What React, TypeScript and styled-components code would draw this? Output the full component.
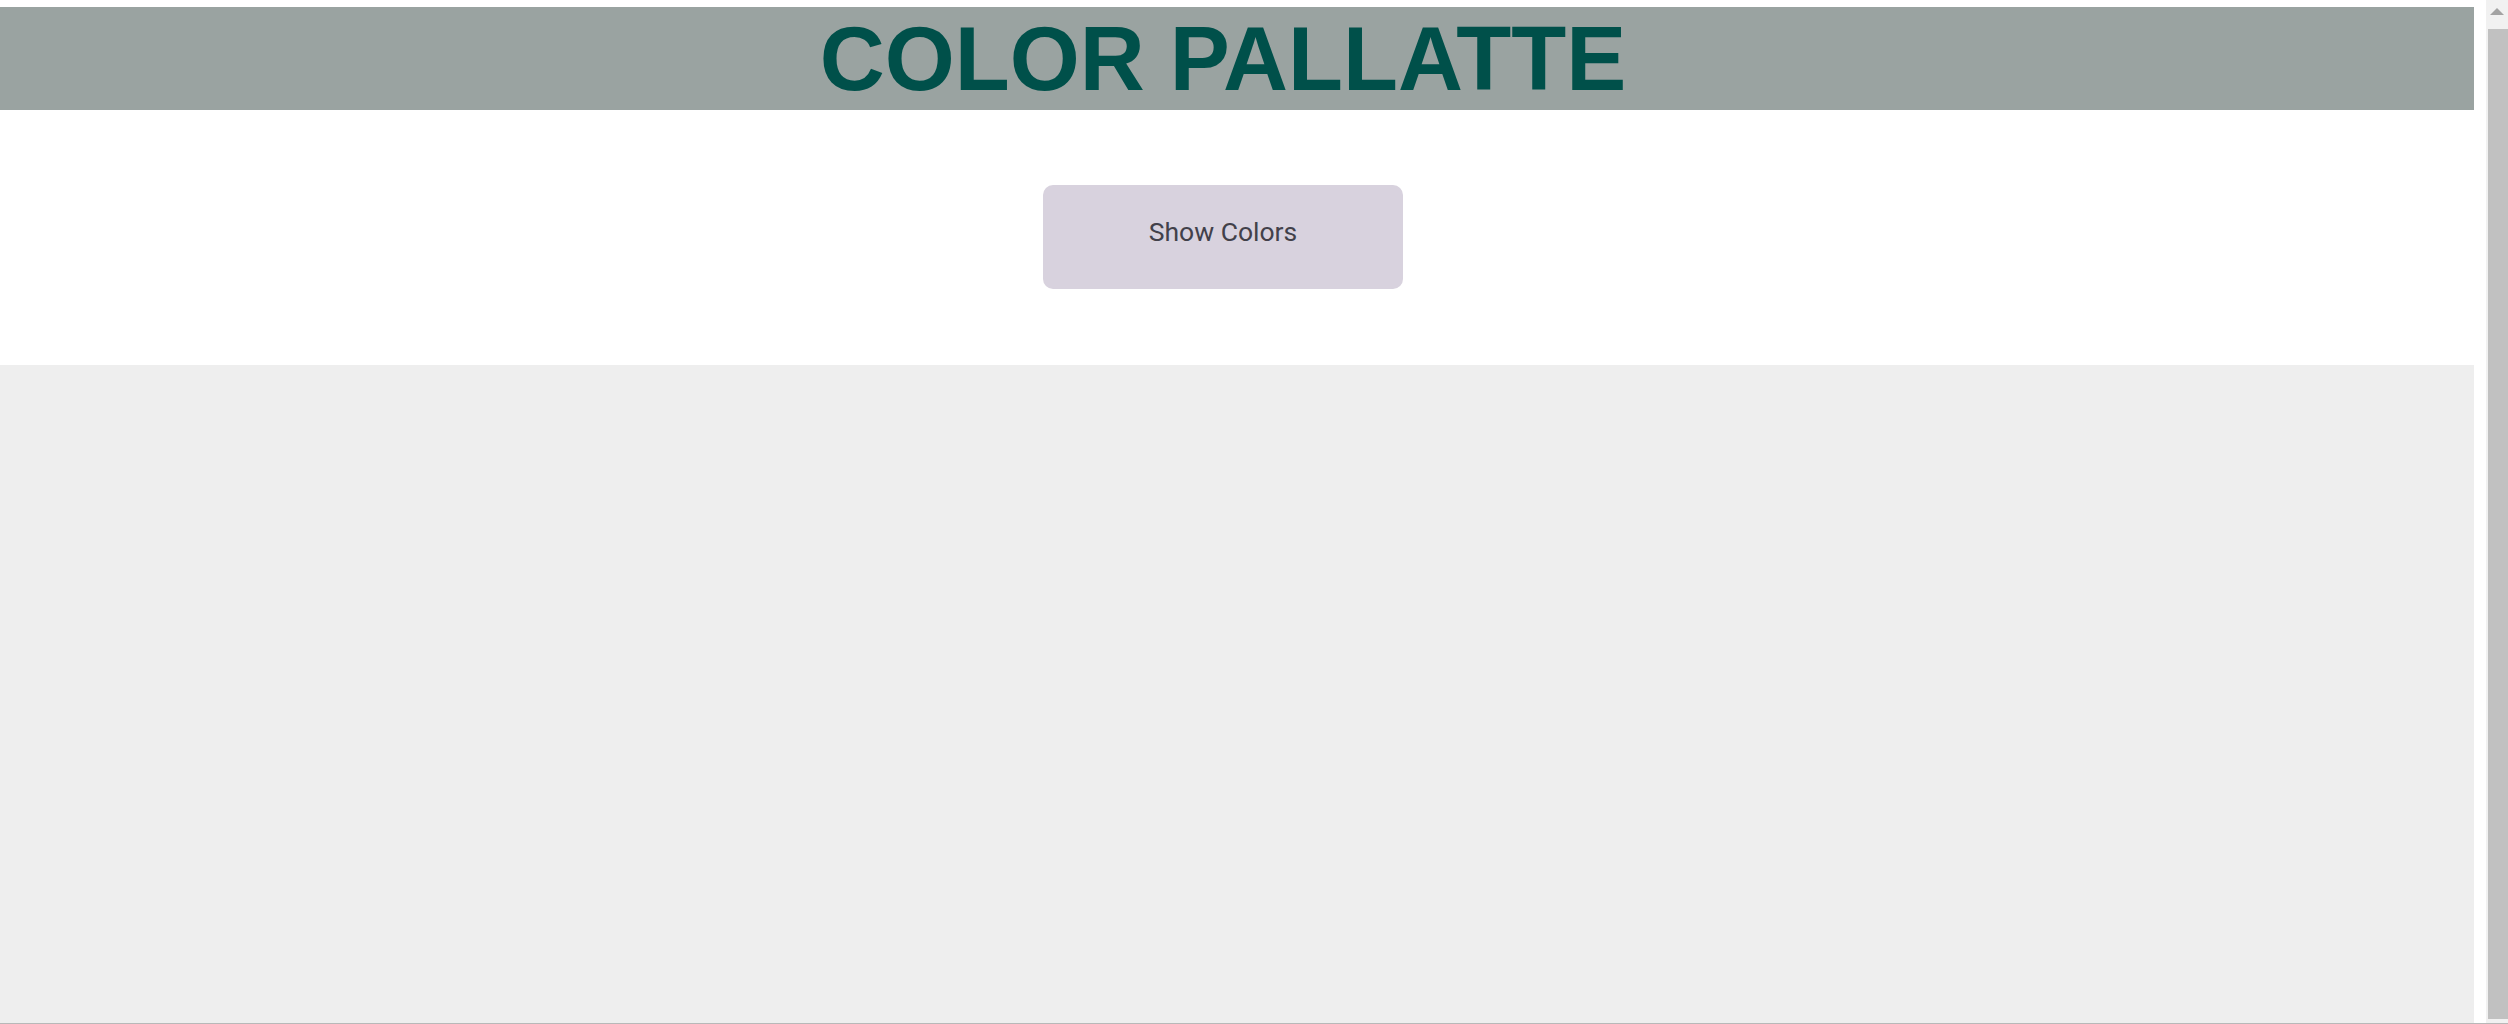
import React from 'react';
import styled, {createGlobalStyle} from 'styled-components';

const GlobalStyle = createGlobalStyle`
  html, body {
    margin: 0;
    padding: 0;
    background: #FFF;
    font-family: Roboto, "Liberation Sans", sans-serif;
    overflow: hidden;
  }
`;

const Page = styled.div`
  padding-top: 7px;
  margin-right: 34px;
`;

// 顶部标题栏
const Header = styled.header`
  height: 103px;
  background: #9aa3a1;
  display: flex;
  justify-content: center;
  align-items: center;
  padding-right: 28px;

  > h1 {
    margin: 0;
    font-family: "Liberation Sans", Arial, sans-serif;
    font-weight: 700;
    font-size: 90px;
    line-height: 1;
    color: #00504a;
  }
`;

const Controls = styled.section`
  height: 255px;
  box-sizing: border-box;
  padding: 75px 28px 0 0;
  display: flex;
  justify-content: center;
  align-items: flex-start;
`;

const Button = styled.button`
  width: 360px;
  height: 104px;
  border: none;
  border-radius: 10px;
  padding: 0 0 12px;
  background: #d8d2de;
  color: #42414a;
  font-family: Roboto, sans-serif;
  font-size: 26.5px;
  cursor: pointer;
`;

// 色块区域
const Palette = styled.main`
  height: 690px;
  background: #eeeeee;
`;

// 浏览器滚动条（截图里的）
const ScrollTrack = styled.div`
  position: fixed;
  top: 0;
  right: 0;
  width: 22px;
  height: 1023px;
  background: #f1f1f1;
  display: flex;
  flex-direction: column;
  align-items: flex-end;

  > .arrow {
    width: 0;
    height: 0;
    margin: 8px 0 0;
    align-self: center;
    border-left: 7px solid transparent;
    border-right: 7px solid transparent;
    border-bottom: 7px solid #a3a3a3;
  }
`;

const ScrollThumb = styled.div`
  margin-top: 14px;
  width: 20px;
  height: 990px;
  background: #c1c1c1;
`;

const BottomEdge = styled.div`
  position: fixed;
  left: 0;
  right: 0;
  bottom: 0;
  height: 1px;
  background: #b8b8b8;
`;

export default function App() {
    return (
        <>
            <GlobalStyle/>
            <Page>
                <Header>
                    <h1>COLOR PALLATTE</h1>
                </Header>
                <Controls>
                    <Button>Show Colors</Button>
                </Controls>
                <Palette/>
            </Page>
            <ScrollTrack>
                <span className="arrow"/>
                <ScrollThumb/>
            </ScrollTrack>
            <BottomEdge/>
        </>
    );
}
